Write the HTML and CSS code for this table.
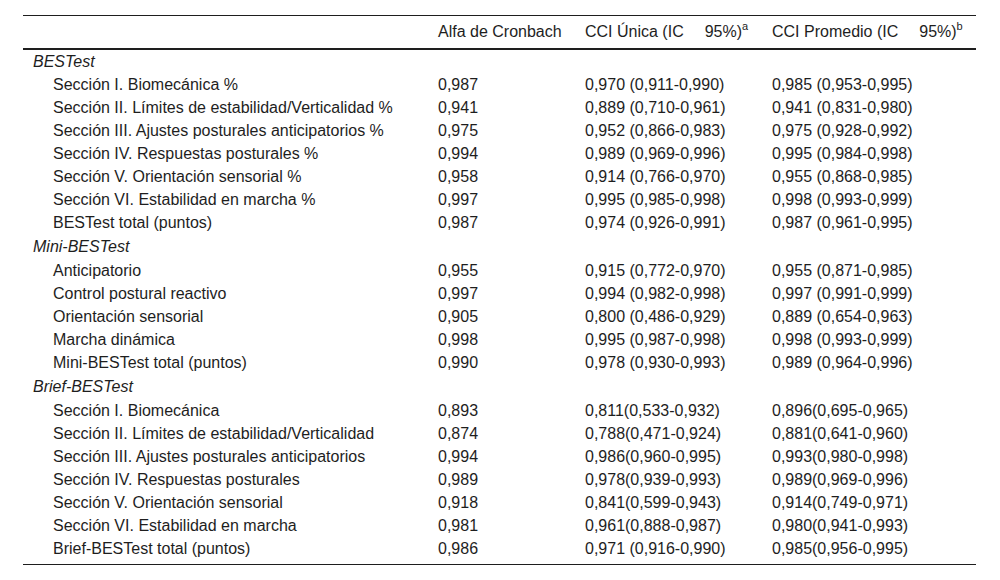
FILE: index.html
```html
<!DOCTYPE html>
<html lang="es">
<head>
<meta charset="utf-8">
<title>Tabla BESTest</title>
<link rel="stylesheet" href="styles.css">
</head>
<body>
<table class="data">
  <colgroup>
    <col class="c-label">
    <col class="c-alfa">
    <col class="c-unica">
    <col class="c-prom">
  </colgroup>
  <thead>
    <tr>
      <th></th>
      <th>Alfa de Cronbach</th>
      <th>CCI Única (IC<span class="gap">95%)</span><sup>a</sup></th>
      <th>CCI Promedio (IC<span class="gap">95%)</span><sup>b</sup></th>
    </tr>
  </thead>
  <tbody>
    <tr class="section first"><td colspan="4">BESTest</td></tr>
    <tr><td class="item">Sección I. Biomecánica %</td><td>0,987</td><td>0,970 (0,911-0,990)</td><td>0,985 (0,953-0,995)</td></tr>
    <tr><td class="item">Sección II. Límites de estabilidad/Verticalidad %</td><td>0,941</td><td>0,889 (0,710-0,961)</td><td>0,941 (0,831-0,980)</td></tr>
    <tr><td class="item">Sección III. Ajustes posturales anticipatorios %</td><td>0,975</td><td>0,952 (0,866-0,983)</td><td>0,975 (0,928-0,992)</td></tr>
    <tr><td class="item">Sección IV. Respuestas posturales %</td><td>0,994</td><td>0,989 (0,969-0,996)</td><td>0,995 (0,984-0,998)</td></tr>
    <tr><td class="item">Sección V. Orientación sensorial %</td><td>0,958</td><td>0,914 (0,766-0,970)</td><td>0,955 (0,868-0,985)</td></tr>
    <tr><td class="item">Sección VI. Estabilidad en marcha %</td><td>0,997</td><td>0,995 (0,985-0,998)</td><td>0,998 (0,993-0,999)</td></tr>
    <tr><td class="item">BESTest total (puntos)</td><td>0,987</td><td>0,974 (0,926-0,991)</td><td>0,987 (0,961-0,995)</td></tr>
    <tr class="section"><td colspan="4">Mini-BESTest</td></tr>
    <tr><td class="item">Anticipatorio</td><td>0,955</td><td>0,915 (0,772-0,970)</td><td>0,955 (0,871-0,985)</td></tr>
    <tr><td class="item">Control postural reactivo</td><td>0,997</td><td>0,994 (0,982-0,998)</td><td>0,997 (0,991-0,999)</td></tr>
    <tr><td class="item">Orientación sensorial</td><td>0,905</td><td>0,800 (0,486-0,929)</td><td>0,889 (0,654-0,963)</td></tr>
    <tr><td class="item">Marcha dinámica</td><td>0,998</td><td>0,995 (0,987-0,998)</td><td>0,998 (0,993-0,999)</td></tr>
    <tr><td class="item">Mini-BESTest total (puntos)</td><td>0,990</td><td>0,978 (0,930-0,993)</td><td>0,989 (0,964-0,996)</td></tr>
    <tr class="section"><td colspan="4">Brief-BESTest</td></tr>
    <tr><td class="item">Sección I. Biomecánica</td><td>0,893</td><td>0,811(0,533-0,932)</td><td>0,896(0,695-0,965)</td></tr>
    <tr><td class="item">Sección II. Límites de estabilidad/Verticalidad</td><td>0,874</td><td>0,788(0,471-0,924)</td><td>0,881(0,641-0,960)</td></tr>
    <tr><td class="item">Sección III. Ajustes posturales anticipatorios</td><td>0,994</td><td>0,986(0,960-0,995)</td><td>0,993(0,980-0,998)</td></tr>
    <tr><td class="item">Sección IV. Respuestas posturales</td><td>0,989</td><td>0,978(0,939-0,993)</td><td>0,989(0,969-0,996)</td></tr>
    <tr><td class="item">Sección V. Orientación sensorial</td><td>0,918</td><td>0,841(0,599-0,943)</td><td>0,914(0,749-0,971)</td></tr>
    <tr><td class="item">Sección VI. Estabilidad en marcha</td><td>0,981</td><td>0,961(0,888-0,987)</td><td>0,980(0,941-0,993)</td></tr>
    <tr class="last"><td class="item">Brief-BESTest total (puntos)</td><td>0,986</td><td>0,971 (0,916-0,990)</td><td>0,985(0,956-0,995)</td></tr>
  </tbody>
</table>
</body>
</html>
```

FILE: styles.css
```css
html, body {
  margin: 0;
  padding: 0;
  background: #ffffff;
}

body {
  padding: 15px 24px 0 23px;
  font-family: "Liberation Sans", Arial, sans-serif;
  font-size: 16px;
  color: #1e1e1e;
}

.data {
  width: 953px;
  border-collapse: collapse;
  table-layout: fixed;
  border-top: 1px solid #1e1e1e;
  border-bottom: 1px solid #1e1e1e;
}

.c-label { width: 415px; }
.c-alfa { width: 147px; }
.c-unica { width: 187px; }
.c-prom { width: 204px; }

.data th {
  font-weight: normal;
  text-align: left;
  height: 32px;
  padding: 0;
  line-height: 18px;
  vertical-align: middle;
  border-bottom: 2px solid #1e1e1e;
  white-space: nowrap;
}

.data th .gap {
  margin-left: 21px;
}

.data sup {
  font-size: 11px;
  line-height: 0;
  position: relative;
  top: -1px;
}

.data td {
  padding: 0;
  height: 23px;
  line-height: 18px;
  vertical-align: middle;
  white-space: nowrap;
}

.data tr.section td {
  font-style: italic;
  padding-left: 10px;
  height: 25px;
}

.data tr.section.first td {
  height: 23px;
}

.data td.item {
  padding-left: 30px;
}

.data tr.last td {
  height: 23px;
  padding-bottom: 4px;
}
```
